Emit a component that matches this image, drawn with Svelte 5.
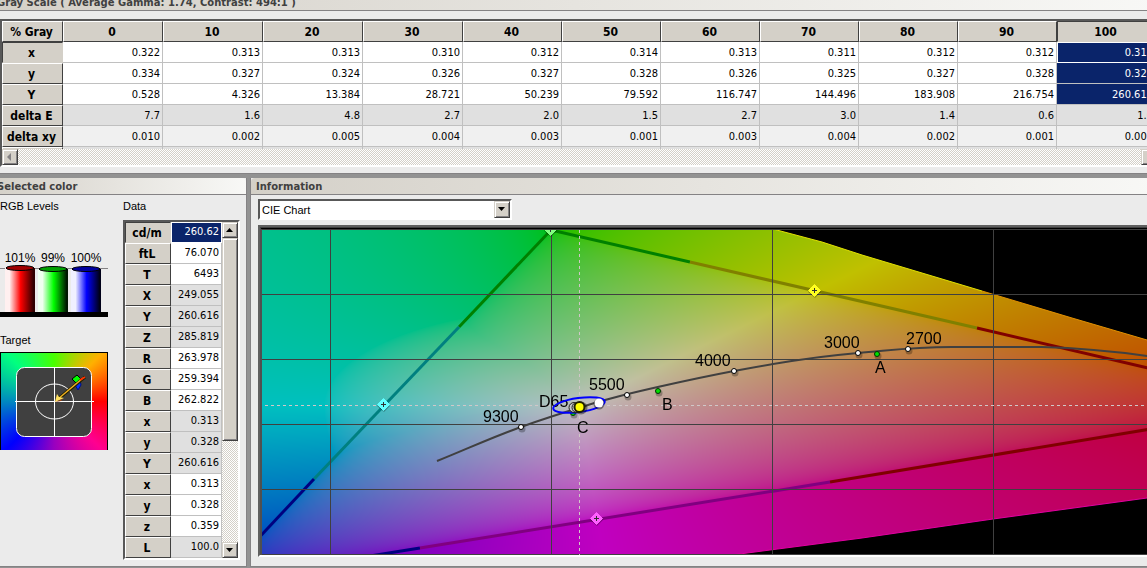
<script lang="ts">
    import { onMount } from 'svelte';

    const levels = [0, 10, 20, 30, 40, 50, 60, 70, 80, 90, 100];
    const selected = 10;

    const grayRows = [
        { name: 'x', kind: 'plain', values: ['0.322', '0.313', '0.313', '0.310', '0.312', '0.314', '0.313', '0.311', '0.312', '0.312', '0.313'] },
        { name: 'y', kind: 'plain', values: ['0.334', '0.327', '0.324', '0.326', '0.327', '0.328', '0.326', '0.325', '0.327', '0.328', '0.328'] },
        { name: 'Y', kind: 'plain', values: ['0.528', '4.326', '13.384', '28.721', '50.239', '79.592', '116.747', '144.496', '183.908', '216.754', '260.616'] },
        { name: 'delta E', kind: 'dark', values: ['7.7', '1.6', '4.8', '2.7', '2.0', '1.5', '2.7', '3.0', '1.4', '0.6', '1.0'] },
        { name: 'delta xy', kind: 'light', values: ['0.010', '0.002', '0.005', '0.004', '0.003', '0.001', '0.003', '0.004', '0.002', '0.001', '0.001'] },
    ];

    const dataRows = [
        ['cd/m', '260.62'], ['ftL', '76.070'], ['T', '6493'],
        ['X', '249.055'], ['Y', '260.616'], ['Z', '285.819'],
        ['R', '263.978'], ['G', '259.394'], ['B', '262.822'],
        ['x', '0.313'], ['y', '0.328'], ['Y', '260.616'],
        ['x', '0.313'], ['y', '0.328'], ['z', '0.359'],
        ['L', '100.0'],
    ];

    // every second group of three rows is shaded
    function shaded(i: number) {
        return Math.floor(i / 3) % 2 === 1;
    }

    const bars = [
        { label: '101%', color: '#f00', top: '#a00000', light: '#fff0f0', dark: '#300000', x: 5, y: 18 },
        { label: '99%', color: '#0f0', top: '#00a000', light: '#f0fff0', dark: '#001800', x: 38, y: 19 },
        { label: '100%', color: '#00f', top: '#0000a0', light: '#f0f0ff', dark: '#000018', x: 71, y: 19 },
    ];

    // chart size and the mapping from chromaticity to pixels
    const W = 1100;
    const H = 325;
    const cx = (x: number) => Math.round((x - 0.3) * 2210) + 289.5;
    const cy = (y: number) => Math.round((0.6 - y) * 650) - 0.5;

    const temps = [
        { t: '9300', x: 259, y: 197, lx: 221, ly: 192 },
        { t: '5500', x: 365, y: 165, lx: 327, ly: 160 },
        { t: '4000', x: 472, y: 141, lx: 433, ly: 136 },
        { t: '3000', x: 596, y: 123, lx: 562, ly: 118 },
        { t: '2700', x: 646, y: 119, lx: 644, ly: 114 },
    ];
    const illuminants = [
        { t: 'A', x: 615, y: 124, lx: 613, ly: 143 },
        { t: 'B', x: 396, y: 161, lx: 400, ly: 180 },
        { t: 'C', x: 311, y: 183, lx: 315, ly: 203 },
    ];
    const secondaries = [
        { x: 288, y: -1, c: '#80ff80' },
        { x: 552, y: 60, c: '#ffff20' },
        { x: 121, y: 174, c: '#60ffff' },
        { x: 334, y: 288, c: '#ff60ff' },
    ];

    let canvas: HTMLCanvasElement;

    onMount(() => {
        const ctx = canvas.getContext('2d')!;
        const img = ctx.createImageData(W, H);
        for (let j = 0; j < H; j++) {
            for (let i = 0; i < W; i++) {
                const x = 0.3 + (i - 289) / 2210;
                const y = 0.6 - (j + 1) / 650;
                const z = 1 - x - y;
                let r = 3.2406 * x - 1.5372 * y - 0.4986 * z;
                const g = Math.max(0, -0.9689 * x + 1.8758 * y + 0.0415 * z);
                let b = Math.max(0, 0.0557 * x - 0.204 * y + 1.057 * z);
                // greens beyond the triangle lean to cyan
                if (r < 0 && g > b) b -= 0.85 * r * (g - b) / g;
                // pale halo round the white point
                const d = Math.hypot((i - 317) / 255, (j - 175) / (j < 175 ? 98 : 165));
                const halo = d < 1 ? 0.9 * Math.pow(1 - d, 1.4) : 0;
                r = Math.max(r, 0, halo * Math.max(g, b));
                const m = Math.max(r, g, b);
                const k = (j * W + i) * 4;
                [r, g, b].forEach((v, n) => {
                    img.data[k + n] = 192 * Math.pow(v / m, 1 / 2.2);
                });
                img.data[k + 3] = 255;
            }
        }
        ctx.putImageData(img, 0, 0);
    });
</script>

<div class="app">
    <section class="panel">
        <h2 class="title tall">Gray Scale ( Average Gamma: 1.74, Contrast: 494:1 )</h2>
        <div class="gray-body">
            <div class="sunken">
                <div class="clip">
                    <table class="grid gray">
                        <colgroup>
                            <col class="head" />
                            {#each levels as level}
                                <col class={level < 40 ? 'wide' : 'mid'} />
                            {/each}
                        </colgroup>
                        <thead>
                            <tr>
                                <th>% Gray</th>
                                {#each levels as level, i}
                                    <th class:pressed={i === selected}>{level}</th>
                                {/each}
                            </tr>
                        </thead>
                        <tbody>
                            {#each grayRows as row, r}
                                <tr class={row.kind}>
                                    <th class:pressed={r === 0}>{row.name}</th>
                                    {#each row.values as value, i}
                                        <td class:sel={i === selected && row.kind === 'plain'} class:focus={i === selected && r === 0}>{value}</td>
                                    {/each}
                                </tr>
                            {/each}
                            <tr class="dark">
                                <th></th>
                                {#each levels as level}<td></td>{/each}
                            </tr>
                        </tbody>
                    </table>
                </div>
                <div class="hscroll">
                    <button class="sb" aria-label="Scroll left">
                        <svg width="12" height="12"><path d="M7 2v8l-4-4z" fill="#848284" /></svg>
                    </button>
                    <button class="sb" aria-label="Scroll right">
                        <svg width="12" height="12"><path d="M5 2v8l4-4z" fill="#848284" /></svg>
                    </button>
                </div>
            </div>
        </div>
    </section>

    <div class="lower">
        <section class="panel">
            <h2 class="title">Selected color</h2>
            <div class="color-body">
                <div class="visuals">
                    <div class="caption">RGB Levels</div>
                    <svg class="rgb" width="108" height="67">
                        <defs>
                            {#each bars as bar, i}
                                <linearGradient id="bar{i}">
                                    <stop offset="0" stop-color={bar.light} />
                                    <stop offset="0.15" stop-color={bar.light} />
                                    <stop offset="0.52" stop-color={bar.color} />
                                    <stop offset="0.95" stop-color={bar.dark} />
                                </linearGradient>
                            {/each}
                        </defs>
                        <path d="M0 18.5H108" stroke="#848284" />
                        {#each bars as bar, i}
                            <text x={bar.x + 15} y="12" text-anchor="middle">{bar.label}</text>
                            <rect x={bar.x} y={bar.y} width="30" height={62 - bar.y} fill="url(#bar{i})" />
                            <ellipse cx={bar.x + 15} cy={bar.y} rx="14" ry="2.5" fill={bar.top} stroke="#000" />
                        {/each}
                        <rect y="62" width="108" height="5" />
                    </svg>
                    <div class="caption target-caption">Target</div>
                    <div class="target">
                        <svg width="106" height="97">
                            <rect x="15.5" y="14.5" width="75" height="69" rx="8" fill="#404040" stroke="#fff" />
                            <ellipse cx="53.5" cy="48.5" rx="19" ry="17.5" fill="none" stroke="#fff" />
                            <path d="M14 48.5H93M53.5 14V84" stroke="#fff" />
                            <path d="M74 32l5-5 1 5-3 5z" fill="#0030ff" stroke="#001080" />
                            <path d="M71 26l5-4 4 4-4 5z" fill="#00ff00" stroke="#000" />
                            <path d="M84 24L57 46" stroke="#202000" stroke-width="3" />
                            <path d="M82 25L57 46" stroke="#f0b020" stroke-width="1.5" />
                            <path d="M79 27l5-3" stroke="#ff3000" stroke-width="2" />
                            <path d="M54 49l2-8 2 3 5 1z" fill="#ffe060" />
                            <path d="M54 49l8-3-2 2z" fill="#a04010" />
                        </svg>
                    </div>
                </div>
                <div class="data">
                    <div class="caption">Data</div>
                    <div class="sunken data-frame">
                        <table class="grid values">
                            <tbody>
                                {#each dataRows as [name, value], i}
                                    <tr class:dark={shaded(i)}>
                                        <th class:pressed={i === 0}>{name}</th>
                                        <td class:sel={i === 0} class:focus={i === 0}>{value}</td>
                                    </tr>
                                {/each}
                            </tbody>
                        </table>
                        <div class="vscroll">
                            <button class="sb" aria-label="Scroll up">
                                <svg width="12" height="12"><path d="M2 8h7l-3.5-4z" /></svg>
                            </button>
                            <div class="thumb"></div>
                            <button class="sb down" aria-label="Scroll down">
                                <svg width="12" height="12"><path d="M2 4h7l-3.5 4z" /></svg>
                            </button>
                        </div>
                    </div>
                </div>
            </div>
        </section>

        <section class="panel info">
            <h2 class="title">Information</h2>
            <div class="info-body">
                <div class="combo">
                    <select aria-label="Information view">
                        <option>CIE Chart</option>
                    </select>
                    <span class="sb arrow">
                        <svg width="12" height="12"><path d="M2 4h7l-3.5 4z" /></svg>
                    </span>
                </div>
                <div class="chart-frame">
                    <div class="chart">
                        <canvas bind:this={canvas} width={W} height={H}></canvas>
                        <svg class="overlay" width={W} height={H}>
                            <!-- outside of the spectrum locus -->
                            <path d="M511 -1L560 12 600 25 660 43 720 61 810 88 885 110 1100 173V-1z" />
                            <path d="M470 325L600 308 731 289 885 268 1100 238V325z" />
                            <path d="M511 -1L560 12 600 25 660 43 720 61" stroke="#e0e000" fill="none" />
                            <path d="M720 61L810 88 885 110 1100 173" stroke="#e09000" fill="none" />
                            <path d="M470 325L600 308 731 289 885 268" stroke="#e000a0" fill="none" />

                            <!-- gamut triangle -->
                            <g fill="none" stroke-width="3">
                                <path d="M289 0L197 97" stroke="#008000" />
                                <path d="M197 97L52 249" stroke="#008080" />
                                <path d="M52 249L-42 349" stroke="#000080" />
                                <path d="M289 0L428 32" stroke="#008000" />
                                <path d="M428 32L715 98" stroke="#808000" />
                                <path d="M715 98L1040 174" stroke="#800000" />
                                <path d="M-42 350L158 318" stroke="#000080" />
                                <path d="M158 318L568 252" stroke="#800080" />
                                <path d="M568 252L1040 174" stroke="#800000" />
                            </g>

                            <g stroke="#404040">
                                {#each [0.2, 0.3, 0.4, 0.5, 0.6] as x}
                                    <line x1={cx(x)} x2={cx(x)} y1="0" y2={H} />
                                {/each}
                                {#each [0.5, 0.4, 0.3, 0.2, 0.1] as y}
                                    <line x1="0" x2={W} y1={cy(y)} y2={cy(y)} />
                                {/each}
                            </g>
                            <path d="M3 175.5H1100M317.5 0V325" stroke="#d0c8c8" stroke-dasharray="3 3" />

                            {#each [...temps, ...illuminants] as p}
                                <text x={p.lx} y={p.ly}>{p.t}</text>
                            {/each}
                            <text x="277" y="177">D65</text>

                            <path
                                d="M175 231C205 219 228 208 259 197S310 180 336 172S430 149 472 141S560 126 596 123S650 117 690 117H780C820 118 850 121 885 126S960 138 1000 148"
                                fill="none"
                                stroke="#404040"
                                stroke-width="2"
                            />
                            {#each temps as p}
                                <circle cx={p.x + 1} cy={p.y + 2} r="3.5" fill="#0004" />
                                <circle cx={p.x} cy={p.y} r="2.5" fill="#fff" stroke="#000" />
                            {/each}
                            {#each illuminants as p}
                                <circle cx={p.x + 1} cy={p.y + 2} r="3.5" fill="#0004" />
                                <circle cx={p.x} cy={p.y} r="2.5" fill="#00e000" stroke="#003000" />
                            {/each}

                            <ellipse cx="317" cy="175" rx="26" ry="7" transform="rotate(-8 317 175)" fill="none" stroke="#0000ff" stroke-width="2" />
                            <circle cx="337" cy="174" r="5.5" fill="#0006" />
                            <circle cx="337" cy="173" r="4.5" fill="#fff" />
                            <circle cx="319" cy="178" r="6.5" fill="#0006" />
                            <circle cx="312" cy="177.5" r="5" fill="#c8c8c8" stroke="#202020" />
                            <circle cx="315" cy="177.5" r="5" fill="#c8c8c8" stroke="#202020" />
                            <circle cx="317.5" cy="177" r="5" fill="#ffff00" stroke="#202000" stroke-width="2" />

                            {#each secondaries as p}
                                <path d="M{p.x} {p.y - 4}l7 6-6 6-7-6z" fill="#0004" />
                                <path d="M{p.x + 0.5} {p.y - 5.5}l6 6-6 6-6-6z" fill={p.c} stroke={p.c} />
                                <path d="M{p.x - 2} {p.y + 0.5}h5m-2.5-2.5v5" stroke="#303030" />
                            {/each}
                        </svg>
                    </div>
                </div>
            </div>
        </section>
    </div>
</div>

<style>
    :global(body) {
        margin: 0;
        overflow: hidden;
        background: #929292;
    }

    /* the window is scrolled slightly off the top left corner */
    .app {
        margin: -8px -12px 0 -8px;
        font-family: "DejaVu Sans Condensed", "Noto Sans", sans-serif;
        font-size: 11px;
        color: #000;
    }

    .panel {
        background: #ebebeb;
        border-bottom: 1px solid #848284;
    }

    .title {
        margin: 0;
        padding-left: 5px;
        height: 16px;
        line-height: 18px;
        font-family: "DejaVu Sans", sans-serif;
        font-size: 10px;
        font-weight: bold;
        color: #404040;
        background: linear-gradient(90deg, #d4d0c8, #f8f8f6);
        border-bottom: 1px solid #848284;
        border-radius: 4px 4px 0 0;
        white-space: nowrap;
    }

    .title.tall {
        height: 18px;
        line-height: 22px;
    }

    .gray-body {
        padding: 8px 0 6px 8px;
    }

    .sunken {
        border: 2px solid #fff;
        border-top-color: #585858;
        border-left-color: #585858;
    }

    .clip {
        height: 128px;
        overflow: hidden;
    }

    .grid {
        border-collapse: separate;
        border-spacing: 0;
        table-layout: fixed;
    }

    .grid th,
    .grid td {
        box-sizing: border-box;
        height: 21px;
        padding: 0 2px 0 0;
        line-height: 18px;
        white-space: nowrap;
        overflow: hidden;
    }

    .grid th {
        background: #d4d0c8;
        border: 1px solid #fff;
        border-right-color: #404040;
        border-bottom-color: #404040;
        text-align: center;
        font-size: 12px;
        font-weight: bold;
    }

    .grid th.pressed {
        border-color: #404040 #d4d0c8 #d4d0c8 #404040;
    }

    .grid td {
        background: #fff;
        border-right: 1px solid #c0c0c0;
        border-bottom: 1px solid #c0c0c0;
        text-align: right;
    }

    .grid.gray td {
        padding-top: 2px;
    }

    .grid .dark td {
        background: #e0e0e0;
    }

    .grid .light td {
        background: #f0f0f0;
    }

    .grid td.sel {
        background: #0a246a;
        color: #fff;
    }

    .grid td.focus {
        outline: 1px solid #fff;
        outline-offset: -1px;
    }

    .gray {
        width: 1154px;
    }

    .head {
        width: 61px;
    }

    .wide {
        width: 100px;
    }

    .mid {
        width: 99px;
    }

    .hscroll,
    .vscroll {
        display: flex;
        justify-content: space-between;
        background: repeating-conic-gradient(#fff 0 25%, #d4d0c8 0 50%) 0 0 / 2px 2px;
    }

    .sb {
        display: block;
        box-sizing: border-box;
        width: 16px;
        height: 16px;
        padding: 0;
        background: #d4d0c8;
        border: 1px solid #d4d0c8;
        border-right-color: #404040;
        border-bottom-color: #404040;
        border-radius: 0;
        box-shadow: inset 1px 1px #fff, inset -1px -1px #848284;
    }

    .sb svg {
        display: block;
        margin: 1px;
    }

    .lower {
        display: flex;
        gap: 3px;
        margin-top: 4px;
    }

    .lower .panel {
        border-right: 1px solid #848284;
    }

    .color-body {
        display: flex;
        gap: 15px;
        padding: 4px 6px 6px 8px;
    }

    .caption {
        height: 21px;
        line-height: 15px;
        font-family: "Liberation Sans", sans-serif;
        font-size: 11px;
    }

    .rgb {
        display: block;
        margin-top: 30px;
        font-family: "Liberation Sans", sans-serif;
        font-size: 12px;
    }

    .target-caption {
        margin-top: 16px;
        height: 19px;
    }

    .target {
        border: 1px solid #000;
        border-bottom: 0;
        height: 97px;
        background: conic-gradient(
            #48ff00, #ffb000 45deg, #ff0000 90deg, #ff0090 135deg,
            #9800c0 180deg, #0000ff 225deg, #0088c0 270deg, #00ff80 315deg, #48ff00
        );
    }

    .target svg {
        display: block;
    }

    .data-frame {
        display: flex;
    }

    .values {
        width: 97px;
    }

    .values th {
        width: 46px;
    }

    .vscroll {
        flex-direction: column;
        justify-content: flex-start;
        width: 16px;
    }

    .thumb {
        box-sizing: border-box;
        height: 203px;
        background: #d4d0c8;
        border: 1px solid #d4d0c8;
        border-right-color: #404040;
        border-bottom-color: #404040;
        box-shadow: inset 1px 1px #fff, inset -1px -1px #848284;
    }

    .down {
        margin-top: auto;
    }

    .info {
        flex: 1;
        min-width: 0;
        border-left: 1px solid #848284;
    }

    .info-body {
        padding: 4px 0 6px 7px;
    }

    .combo {
        position: relative;
        width: 254px;
    }

    select {
        display: block;
        box-sizing: border-box;
        appearance: none;
        width: 100%;
        height: 21px;
        padding: 0 20px 0 2px;
        background: #fff;
        border: 2px solid #fff;
        border-top-color: #585858;
        border-left-color: #585858;
        border-radius: 0;
        font-family: "Liberation Sans", sans-serif;
        font-size: 11px;
        color: #000;
    }

    .arrow {
        position: absolute;
        top: 2px;
        right: 2px;
        height: 17px;
        pointer-events: none;
    }

    .chart-frame {
        margin-top: 5px;
        border: 2px solid #fff;
        border-top-color: #606060;
        border-left-color: #606060;
    }

    .chart {
        position: relative;
        height: 325px;
        overflow: hidden;
        border-top: 3px double #404040;
        border-left: 2px solid #505050;
        background: #000;
    }

    canvas {
        display: block;
    }

    .overlay {
        position: absolute;
        top: 0;
        left: 0;
        font-family: "Liberation Sans", sans-serif;
        font-size: 16px;
    }
</style>
